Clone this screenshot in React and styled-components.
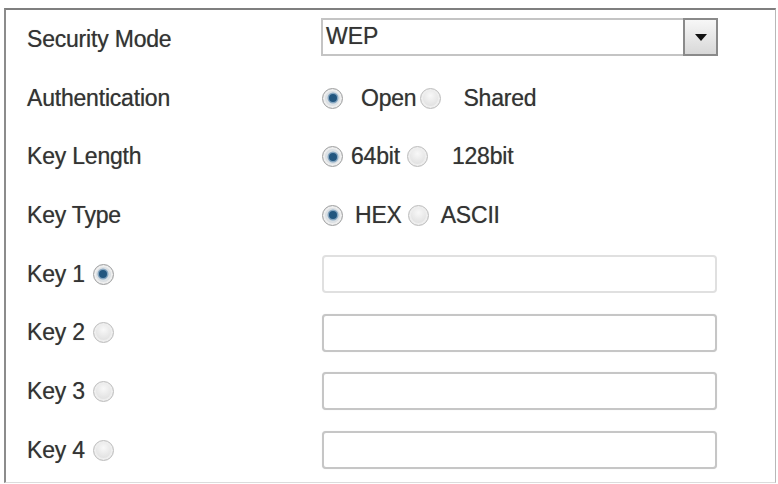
import React from "react";
import styled, { createGlobalStyle } from "styled-components";

const GlobalStyle = createGlobalStyle`
  html, body {
    margin: 0;
    padding: 0;
    background: #ffffff;
  }
  body {
    font-family: "Liberation Sans", Arial, sans-serif;
    color: #333;
  }
`;

const Panel = styled.div`
  box-sizing: border-box;
  width: 772px;
  height: 475px;
  margin: 8px 0 0 4px;
  padding: 0 0 0 21px;
  border-top: 2px solid #7f7f7f;
  border-left: 2px solid #8c8c8c;
  border-right: 1px solid #b8b8b8;
  border-bottom: 1px solid #dcdcdc;
  background: #fff;
`;

const Row = styled.div`
  display: grid;
  grid-template-columns: 294px 1fr;
  align-items: center;
  height: 58.7px;
`;

const Label = styled.div`
  display: flex;
  align-items: center;
  gap: 8px;
  font-size: 23px;
  letter-spacing: -0.2px;
  color: #333;
  text-shadow: 0 0 0.7px rgba(0, 0, 0, 0.45);
`;

const Value = styled.div`
  display: flex;
  align-items: center;
  margin-top: ${({ $shift }) => $shift || 0}px;
`;

const Select = styled.div`
  box-sizing: border-box;
  display: flex;
  align-items: stretch;
  width: 397px;
  height: 38px;
  border: 2px solid #c4c4c4;
  background: #fff;
`;

const SelectText = styled.div`
  flex: 1;
  display: flex;
  align-items: center;
  padding-left: 3px;
  font-size: 23px;
  color: #333;
  text-shadow: 0 0 0.7px rgba(0, 0, 0, 0.45);
`;

const DropButton = styled.div`
  box-sizing: border-box;
  width: 35px;
  margin: -2px -2px -2px 0;
  border: 2px solid #8a8a8a;
  background: linear-gradient(#f7f7f7, #d8d8d8);
  display: flex;
  align-items: center;
  justify-content: center;

  &::after {
    content: "";
    width: 0;
    height: 0;
    border-left: 6px solid transparent;
    border-right: 6px solid transparent;
    border-top: 7px solid #111;
    margin-top: 2px;
  }
`;

const TextInput = styled.div`
  box-sizing: border-box;
  width: 395px;
  height: 38px;
  margin-left: 1px;
  border: 2px solid ${({ $faint }) => ($faint ? "#e0e0e0" : "#c6c6c6")};
  border-radius: 4px;
  background: #fff;
  box-shadow: ${({ $faint }) => ($faint ? "none" : "0 0 1px rgba(0,0,0,0.15)")};
`;

const Radio = styled.span`
  box-sizing: border-box;
  flex: none;
  display: inline-flex;
  align-items: center;
  justify-content: center;
  width: 21px;
  height: 21px;
  margin-left: ${({ $ml }) => $ml || 0}px;
  border-radius: 50%;
  border: 1px solid ${({ $on }) => ($on ? "#a0a0a0" : "#bdbdbd")};
  background: ${({ $on }) =>
    $on
      ? "radial-gradient(circle, #e6ebef 0%, #cfd4d8 100%)"
      : "radial-gradient(circle at 50% 35%, #f8f8f8 0%, #d6d6d6 100%)"};
  box-shadow: inset 0 0 0 2px #eeeeee;

  &::after {
    content: "";
    display: ${({ $on }) => ($on ? "block" : "none")};
    width: 8px;
    height: 8px;
    border-radius: 50%;
    background: #22567f;
    box-shadow: 0 0 0 1.5px #86a6c0;
  }
`;

const OptionText = styled.span`
  margin-left: ${({ $ml }) => $ml || 0}px;
  font-size: 23px;
  letter-spacing: -0.2px;
  color: #333;
  text-shadow: 0 0 0.7px rgba(0, 0, 0, 0.45);
`;

const RadioGroup = ({ options }) => (
  <Value>
    {options.map((o, i) => (
      <React.Fragment key={o.text}>
        <Radio $on={i === 0} $ml={o.gap} />
        <OptionText $ml={o.lead}>{o.text}</OptionText>
      </React.Fragment>
    ))}
  </Value>
);

const keys = [1, 2, 3, 4];

export default function App() {
  return (
    <>
      <GlobalStyle />
      <Panel>
        <Row>
          <Label>Security Mode</Label>
          <Value $shift={-5}>
            <Select>
              <SelectText>WEP</SelectText>
              <DropButton />
            </Select>
          </Value>
        </Row>
        <Row>
          <Label>Authentication</Label>
          <RadioGroup
            options={[
              { text: "Open", gap: 1, lead: 18 },
              { text: "Shared", gap: 4, lead: 22 },
            ]}
          />
        </Row>
        <Row>
          <Label>Key Length</Label>
          <RadioGroup
            options={[
              { text: "64bit", gap: 1, lead: 8 },
              { text: "128bit", gap: 7, lead: 24 },
            ]}
          />
        </Row>
        <Row>
          <Label>Key Type</Label>
          <RadioGroup
            options={[
              { text: "HEX", gap: 1, lead: 12 },
              { text: "ASCII", gap: 6, lead: 12 },
            ]}
          />
        </Row>
        {keys.map((k) => (
          <Row key={k}>
            <Label>
              Key {k}
              <Radio $on={k === 1} />
            </Label>
            <Value>
              <TextInput $faint={k === 1} />
            </Value>
          </Row>
        ))}
      </Panel>
    </>
  );
}
